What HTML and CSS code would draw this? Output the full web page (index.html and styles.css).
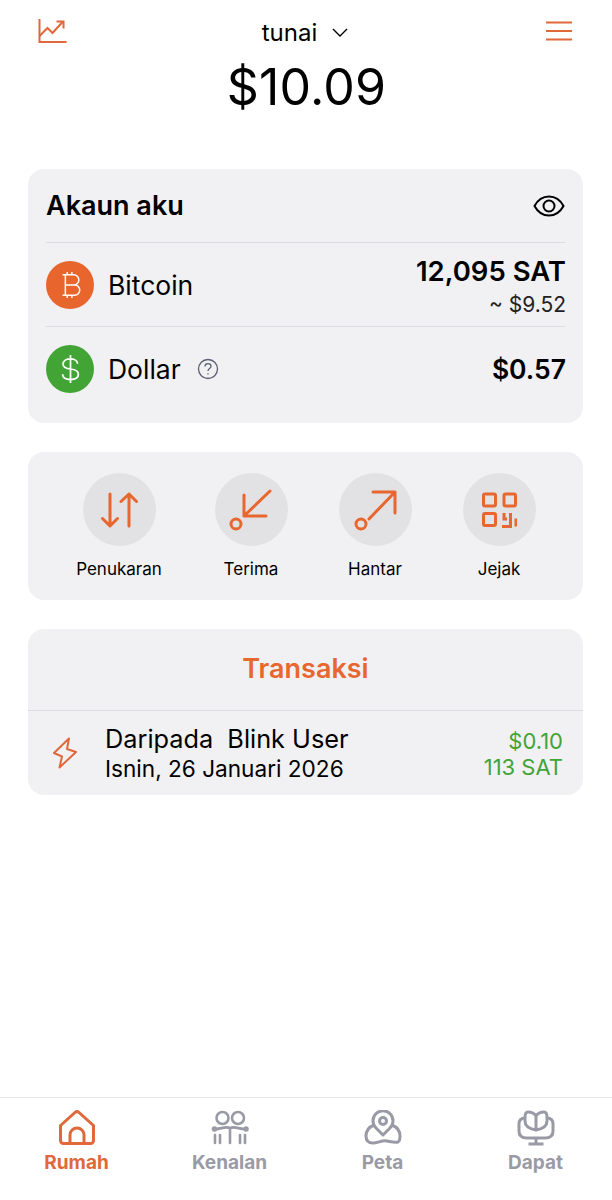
FILE: index.html
```html
<!DOCTYPE html>
<html lang="ms">
<head>
    <meta charset="UTF-8">
    <meta name="viewport" content="width=device-width, initial-scale=1.0">
    <title>Rumah</title>
    <link rel="stylesheet" href="styles.css">
</head>
<body>
    <div class="screen">
        <main class="content">
            <header class="topbar">
                <svg class="top-icon" width="30" height="26" viewBox="0 0 30 26" fill="none" stroke="#e0683a" stroke-width="2">
                    <path d="M1.500 0v23h27"/>
                    <path d="M1.500 17l8-8 5 5 10-11"/>
                    <path d="M18.500 2.500h7v7"/>
                </svg>
                <div class="wallet-name">
                    <span>tunai</span>
                    <svg width="18" height="11" viewBox="0 0 18 11" fill="none" stroke="#000" stroke-width="1.400">
                        <path d="M2 2l7 7 7-7"/>
                    </svg>
                </div>
                <svg class="top-icon" width="26" height="22" viewBox="0 0 26 22" fill="none" stroke="#e0683a" stroke-width="2">
                    <path d="M0 1.500h26M0 10h26M0 18.500h26"/>
                </svg>
            </header>
            <div class="balance">$10.09</div>

            <section class="card accounts">
                <div class="accounts-head">
                    <h2>Akaun aku</h2>
                    <svg width="32" height="24" viewBox="0 0 32 24" fill="none" stroke="#000" stroke-width="2">
                        <path d="M1.500 12C5 5.500 10 2.500 16 2.500S27 5.500 30.500 12C27 18.500 22 21.500 16 21.500S5 18.500 1.500 12z"/>
                        <circle cx="16" cy="12" r="5.500"/>
                    </svg>
                </div>
                <div class="account">
                    <div class="coin coin-btc">
                        <svg width="26" height="30" viewBox="0 0 28 32" fill="none" stroke="#fff" stroke-width="1.600">
                            <path d="M9 5h9a5 5 0 0 1 0 11H9h10a5.500 5.500 0 0 1 0 11H9zM6 5h3M6 27h3M11 2v3M16 2v3M11 27v3M16 27v3"/>
                        </svg>
                    </div>
                    <span class="account-name">Bitcoin</span>
                    <div class="account-amount two-line">
                        <strong>12,095 SAT</strong>
                        <span>~ $9.52</span>
                    </div>
                </div>
                <div class="account">
                    <div class="coin coin-usd">
                        <svg width="21" height="30" viewBox="0 0 24 34" fill="none" stroke="#fff" stroke-width="2">
                            <path d="M20 11c0-3.500-3.500-5.500-8-5.500S3.500 7.500 3.500 11.500 7 16.500 12 17s9 2 9 6-3.800 6-9 6-9-2.200-9-6M12 1v32"/>
                        </svg>
                    </div>
                    <span class="account-name">Dollar</span>
                    <svg class="help" width="22" height="22" viewBox="0 0 22 22" fill="none" stroke="#5d5d72" stroke-width="1.300">
                        <circle cx="11" cy="11" r="9.500"/>
                        <path d="M8 8.500c0-1.800 1.300-2.800 3-2.800s3 1 3 2.600c0 2.400-3 2.200-3 4.700"/>
                        <path d="M11 15.300v1.200"/>
                    </svg>
                    <div class="account-amount">
                        <strong class="usd-amount">$0.57</strong>
                    </div>
                </div>
            </section>

            <section class="card actions">
                <div class="action action-first">
                    <div class="action-circle">
                        <svg width="40" height="40" viewBox="0 0 40 40" fill="none" stroke="#e8672f" stroke-width="3" stroke-linecap="round" stroke-linejoin="round">
                            <path d="M11 4v32M3.500 28.500L11 36l7.500-7.500"/>
                            <path d="M30 36V4M22 11.500L30 4l7.500 7.500"/>
                        </svg>
                    </div>
                    <span>Penukaran</span>
                </div>
                <div class="action">
                    <div class="action-circle">
                        <svg width="44" height="44" viewBox="0 0 44 44" fill="none" stroke="#e8672f" stroke-width="3" stroke-linecap="round" stroke-linejoin="round">
                            <path d="M41 3L15 28M15 7v21h22"/>
                            <circle cx="7" cy="36" r="5"/>
                        </svg>
                    </div>
                    <span>Terima</span>
                </div>
                <div class="action">
                    <div class="action-circle">
                        <svg width="44" height="44" viewBox="0 0 44 44" fill="none" stroke="#e8672f" stroke-width="3" stroke-linecap="round" stroke-linejoin="round">
                            <path d="M16 31L42 4M20 4h22v21"/>
                            <circle cx="8" cy="36" r="5"/>
                        </svg>
                    </div>
                    <span>Hantar</span>
                </div>
                <div class="action">
                    <div class="action-circle">
                        <svg width="36" height="36" viewBox="0 0 36 36" fill="none" stroke="#e8672f" stroke-width="3">
                            <rect x="2.500" y="2" width="12" height="12" rx="1.500"/>
                            <rect x="23" y="2" width="11.500" height="12" rx="1.500"/>
                            <rect x="2.500" y="21.500" width="12" height="12" rx="1.500"/>
                            <path d="M23 21v6h3M29.500 21v13.500H21M35 26.500v8"/>
                        </svg>
                    </div>
                    <span>Jejak</span>
                </div>
            </section>

            <section class="card transactions">
                <h2 class="transactions-title">Transaksi</h2>
                <div class="transaction">
                    <svg class="bolt" width="26" height="32" viewBox="0 0 26 32" fill="none" stroke="#e0683a" stroke-width="2" stroke-linejoin="round">
                        <path d="M17 1.500L2 16l8 3.500L7.500 30.500 24 15l-9-3z"/>
                    </svg>
                    <div class="transaction-text">
                        <div class="transaction-title">Daripada&nbsp; Blink User</div>
                        <div class="transaction-date">Isnin, 26 Januari 2026</div>
                    </div>
                    <div class="transaction-amount">
                        <div>$0.10</div>
                        <div>113 SAT</div>
                    </div>
                </div>
            </section>
        </main>

        <nav class="tabbar">
            <div class="tab tab-active">
                <svg width="38" height="36" viewBox="0 0 38 36" fill="none" stroke="currentColor" stroke-width="3" stroke-linejoin="round">
                    <path d="M2.500 15.500L17 2.500a3 3 0 0 1 4 0l14.500 13v15a3 3 0 0 1-3 3h-27a3 3 0 0 1-3-3z"/>
                    <path d="M12 33.500V25a7 7 0 0 1 14 0v8.500"/>
                </svg>
                <span>Rumah</span>
            </div>
            <div class="tab">
                <svg width="38" height="36" viewBox="0 0 38 36" fill="none" stroke="currentColor" stroke-width="2.600" stroke-linecap="round">
                    <circle cx="11.500" cy="8" r="6"/>
                    <circle cx="27" cy="8" r="6"/>
                    <path d="M5 19c5 0 9-3 14-1 5-2 9 1 14 1M19 18v15"/>
                    <path d="M4 25v8M9 25v8M29 25v8M34 25v8"/>
                    <circle cx="3.500" cy="19" r="1.500"/>
                    <circle cx="35" cy="19" r="1.500"/>
                </svg>
                <span>Kenalan</span>
            </div>
            <div class="tab">
                <svg width="38" height="36" viewBox="0 0 38 36" fill="none" stroke="currentColor" stroke-width="3" stroke-linejoin="round">
                    <path d="M19 25l-7-7a10 10 0 1 1 14 0z"/>
                    <circle cx="19" cy="11" r="3.500"/>
                    <path d="M10 15c-5 2-8 6-8 11 0 5 3 7 7 7 5 0 9-3 14-2 5 1 8 2 11 1 2-1 2-3 2-6 0-5-3-9-8-11"/>
                </svg>
                <span>Peta</span>
            </div>
            <div class="tab">
                <svg width="38" height="36" viewBox="0 0 38 36" fill="none" stroke="currentColor" stroke-width="3" stroke-linejoin="round">
                    <path d="M8 8c-4 0-6 2-6 6v7c0 5 3 7 8 7h18c5 0 8-2 8-7v-7c0-4-2-6-6-6"/>
                    <path d="M19 6c-2-3-5-4-8-4-2 0-3 2-3 5v4c0 5 5 8 11 9 6-1 11-4 11-9V7c0-3-1-5-3-5-3 0-6 1-8 4zM19 6v14"/>
                    <path d="M19 28v6M11.500 34h15"/>
                </svg>
                <span>Dapat</span>
            </div>
        </nav>
    </div>
</body>
</html>
```

FILE: styles.css
```css
html, body {
    margin: 0;
    padding: 0;
    background-color: #fff;
}
body {
    font-family: Inter, "Liberation Sans", sans-serif;
    color: #000;
}
h2 {
    margin: 0;
}
.screen {
    height: 1200px;
    display: flex;
    flex-direction: column;
    overflow: hidden;
}
.content {
    flex: 1;
    padding: 0 29px 0 28px;
}
.topbar {
    height: 64px;
    display: flex;
    align-items: center;
    justify-content: space-between;
    padding: 0 11px 0 10px;
}
.wallet-name {
    display: flex;
    align-items: center;
    gap: 14px;
    font-size: 24px;
    margin-right: 3px;
}
.balance {
    font-size: 50px;
    line-height: 46px;
    text-align: center;
    letter-spacing: 0.2px;
    padding-left: 2px;
}
.card {
    background-color: #f1f1f4;
    border-radius: 16px;
}
.accounts {
    margin-top: 59px;
    height: 254px;
    padding: 0 18px;
    box-sizing: border-box;
}
.accounts-head {
    height: 73px;
    display: flex;
    align-items: center;
    justify-content: space-between;
}
.accounts-head h2 {
    font-size: 27px;
    font-weight: 600;
}
.account {
    height: 84px;
    box-sizing: border-box;
    border-top: 1px solid #dcdce0;
    display: flex;
    align-items: center;
}
.coin {
    width: 48px;
    height: 48px;
    border-radius: 50%;
    display: flex;
    align-items: center;
    justify-content: center;
}
.coin-btc {
    background-color: #e8652e;
}
.coin-usd {
    background-color: #42a435;
}
.account-name {
    font-size: 26.5px;
    margin-left: 14px;
}
.help {
    margin-left: 16px;
}
.account-amount {
    margin-left: auto;
    margin-right: -1px;
    display: flex;
    flex-direction: column;
    align-items: flex-end;
}
.two-line {
    padding-top: 3px;
}
.account-amount strong {
    font-size: 27.5px;
    font-weight: 600;
    line-height: 32px;
}
.account-amount .usd-amount {
    font-size: 26.5px;
}
.account-amount span {
    font-size: 21px;
    line-height: 26px;
    margin-top: 5px;
    color: #222;
}
.actions {
    margin-top: 29px;
    height: 148px;
    display: flex;
    gap: 34px;
    padding: 21px 0 0 46px;
    box-sizing: border-box;
}
.action {
    width: 90px;
    display: flex;
    flex-direction: column;
    align-items: center;
    font-size: 17px;
    white-space: nowrap;
}
.action-first {
    margin-right: 8px;
}
.action-circle {
    width: 73px;
    height: 73px;
    border-radius: 50%;
    background-color: #e2e2e4;
    display: flex;
    align-items: center;
    justify-content: center;
    margin-bottom: 13px;
}
.transactions {
    margin-top: 29px;
    height: 166px;
}
.transactions-title {
    height: 82px;
    line-height: 79px;
    text-align: center;
    font-size: 27px;
    font-weight: 600;
    color: #e8672f;
    border-bottom: 1px solid #dcdce0;
    box-sizing: border-box;
}
.transaction {
    height: 84px;
    display: flex;
    align-items: center;
    padding: 0 20px 0 24px;
}
.transaction-text {
    margin-left: 27px;
}
.transaction-title {
    font-size: 25.3px;
    line-height: 31px;
}
.transaction-date {
    font-size: 22.6px;
    line-height: 29px;
}
.transaction-amount {
    margin-left: auto;
    text-align: right;
    color: #42a435;
    font-size: 22px;
    line-height: 26px;
    padding-top: 2px;
}
.tabbar {
    height: 103px;
    border-top: 1px solid #e8e8ea;
    display: grid;
    grid-template-columns: repeat(4, 1fr);
    box-sizing: border-box;
}
.tab {
    display: flex;
    flex-direction: column;
    align-items: center;
    padding-top: 12px;
    color: #9a9aa6;
    font-size: 19px;
    font-weight: 700;
    gap: 5px;
}
.tab-active {
    color: #e0683a;
}
```
